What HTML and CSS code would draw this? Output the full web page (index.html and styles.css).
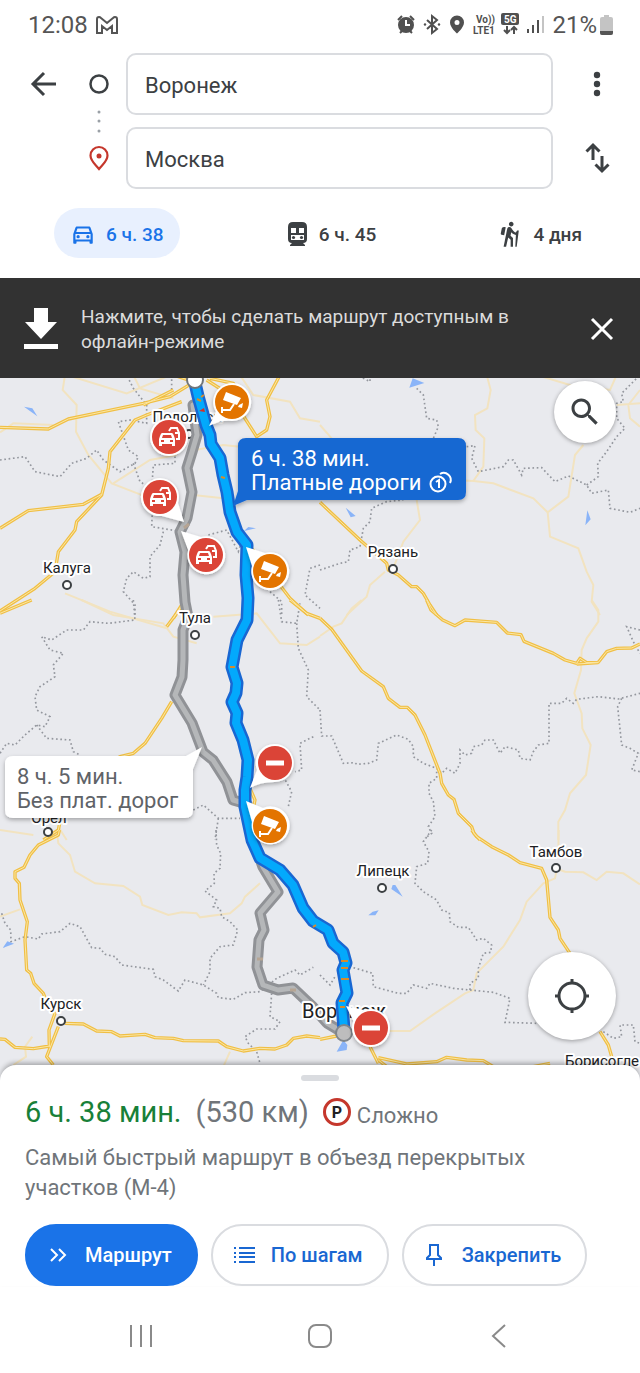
FILE: index.html
```html
<!DOCTYPE html>
<html lang="ru">
<head>
<meta charset="utf-8">
<meta name="viewport" content="width=device-width, initial-scale=1">
<title>Воронеж — Москва</title>
<link rel="stylesheet" href="styles.css">
</head>
<body>
<div class="app">
<div class="status">
  <div class="status-group">
    <span class="status-text">12:08</span>
    <svg class="gmail" width="24" height="20" viewBox="0 0 24 20"><path d="M2 18V4q0-2 2-2 1 0 2 1l6 5 6-5q1-1 2-1 2 0 2 2v14h-5V11l-5 4-5-4v7z"/></svg>
  </div>
  <div class="status-group">
    <svg class="status-icons" width="148" height="26" viewBox="397 12 148 26">
      <circle cx="406" cy="25" r="8"/><path class="ink-line" d="M398 20l4-4M414 20l-4-4M400 33l2-2M412 33l-2-2"/><path class="white-line" d="M406 20v5h4"/>
      <path class="ink-line" d="M427 20l10 9-5 4V16l5 4-10 9"/><circle cx="425" cy="24.500" r="1.200"/><circle cx="439" cy="24.500" r="1.200"/>
      <path fill-rule="evenodd" d="M457 15.500a7 7 0 0 0-7 7c0 5 7 11 7 11s7-6 7-11a7 7 0 0 0-7-7zm0 4.500a2.500 2.500 0 1 1 0 5 2.500 2.500 0 0 1 0-5z"/>
      <text x="476" y="23" class="tiny">Vo))</text><text x="473" y="34" class="tiny">LTE1</text>
      <rect x="501" y="13" width="18" height="12" rx="2"/><text x="504" y="23" class="tiny knock">5G</text>
      <path class="ink-thin" d="M507 26v7m-3-3l3 3 3-3M514 34v-7m-3 3l3-3 3 3"/>
      <path class="ink-bar" d="M528 29v4M533 25v8M538 20v13"/><path class="faint-bar" d="M543 16v17"/>
    </svg>
    <span class="status-text">21%</span>
    <svg width="14" height="20" viewBox="0 0 14 20"><path fill="#c4c4c4" d="M4 0h5v2h2q2 0 2 2v14q0 2-2 2H2q-2 0-2-2V4q0-2 2-2h2z"/><path fill="#555" d="M0 16h13v2q0 2-2 2H2q-2 0-2-2z"/></svg>
  </div>
</div>

<header class="directions">
  <form class="search-grid">
    <button type="button" class="icon-btn back" aria-label="Назад"><svg width="28" height="28" viewBox="0 0 28 28"><path class="dark-line" d="M26 14H3M14 3L3 14l11 11"/></svg></button>
    <svg class="rail" width="24" height="136" viewBox="0 0 24 136">
      <circle cx="12" cy="31" r="8.500" fill="none" stroke="#3c4043" stroke-width="2.500"/>
      <g fill="#9aa0a6"><circle cx="12" cy="59" r="1.500"/><circle cx="12" cy="68" r="1.500"/><circle cx="12" cy="78" r="1.500"/></g>
      <path d="M12 116c-4-5-8.500-8-8.500-13.500a8.500 8.500 0 0 1 17 0C20.500 108 16 111 12 116z" fill="none" stroke="#c5372c" stroke-width="2.200"/><circle cx="12" cy="103" r="2.500" fill="#c5372c"/>
    </svg>
    <input class="place place-from" type="text" value="Воронеж" aria-label="Откуда">
    <input class="place place-to" type="text" value="Москва" aria-label="Куда">
    <button type="button" class="icon-btn menu" aria-label="Ещё"><svg width="28" height="28" viewBox="0 0 28 28" fill="#3c4043"><circle cx="14" cy="5" r="3.200"/><circle cx="14" cy="14" r="3.200"/><circle cx="14" cy="23" r="3.200"/></svg></button>
    <button type="button" class="icon-btn swap" aria-label="Поменять местами"><svg width="28" height="32" viewBox="0 0 28 32"><path class="dark-line" d="M10 18V3M3.500 9.500L10 3l6.500 6.500M19 14v15M12.500 22.500L19 29l6.500-6.500"/></svg></button>
  </form>
  <nav class="modes">
    <button class="mode mode-active"><svg width="26" height="26" viewBox="0 0 24 24"><path d="M18.920 6.010C18.720 5.420 18.160 5 17.500 5h-11c-.66 0-1.210.42-1.420 1.010L3 12v8c0 .55.45 1 1 1h1c.55 0 1-.45 1-1v-1h12v1c0 .55.45 1 1 1h1c.55 0 1-.45 1-1v-8zM6.850 7h10.290l1.080 3.110H5.770zM19 17H5v-5h14z"/><circle cx="7.500" cy="14.500" r="1.500"/><circle cx="16.500" cy="14.500" r="1.500"/></svg>6 ч. 38</button>
    <button class="mode"><svg width="22" height="28" viewBox="0 0 22 28"><path fill-rule="evenodd" d="M6 2h9q5 0 5 5v12q0 4-4 4l2 2v1H3v-1l2-2q-4 0-4-4V7q0-5 5-5zM4 8v5h5V8zm8 0v5h5V8zm-8 7v5h13v-5z"/><circle cx="6.500" cy="17.500" r="1.600"/><circle cx="14.500" cy="17.500" r="1.600"/></svg>6 ч. 45</button>
    <button class="mode"><svg width="24" height="28" viewBox="3 0 20.600 24"><path d="M13.500 5.500c1.100 0 2-.9 2-2s-.9-2-2-2-2 .9-2 2 .9 2 2 2zM17.500 10.780c-1.230-.37-2.220-1.170-2.800-2.180l-1-1.600c-.41-.65-1.110-1-1.840-1-.78 0-1.590.5-1.780 1.440S7 23 7 23h2.100l1.800-8 2.100 2v6h2v-7.500l-2.100-2 .6-3c1 1.150 2.410 2.010 4 2.340L17 23h1.200L20 9h-1.500zM7.430 13.130l-2.120-.41c-.54-.11-.9-.63-.79-1.170l.76-3.930c.21-1.080 1.260-1.790 2.340-1.580l1.160.23z"/></svg>4 дня</button>
  </nav>
</header>

<section class="offline">
  <svg width="34" height="42" viewBox="0 0 34 42" fill="#fff"><path d="M10 0h14v14h9L17 31 1 14h9zM0 36h34v5H0z"/></svg>
  <p>Нажмите, чтобы сделать маршрут доступным в офлайн-режиме</p>
  <button class="icon-btn" aria-label="Закрыть"><svg width="24" height="24" viewBox="0 0 24 24"><path d="M2 2l20 20M22 2L2 22" stroke="#fff" stroke-width="3"/></svg></button>
</section>

<main class="map">
<svg class="map-canvas" viewBox="0 378 640 702" role="img" aria-label="Карта маршрута">
  <defs>
    <filter id="shade" x="-20%" y="-20%" width="140%" height="150%"><feDropShadow dx="0" dy="2" stdDeviation="2" flood-opacity=".3"/></filter>
    <g id="camera"><circle r="17" fill="#e37400"/><path fill="#fff" d="M-6-10L9-4 5 3-9-2zM7 3l4-2-1 5-4-1z"/><path d="M-10 5v6M-10 8h8l4-6" fill="none" stroke="#fff" stroke-width="2"/></g>
    <g id="traffic"><circle r="17" fill="#db4437"/><path fill="#fff" fill-rule="evenodd" d="M-7-4H3Q4-4 5-1L6 2V9H3V7H-7V9h-3V2l1-3Q-8-4-7-4zM-6-2L-7 1H3L2-2zM-8 3v2h3V3zM1 3v2h3V3z"/><path d="M0-6L2-9H8L10-4V2H7M6-4H9" fill="none" stroke="#fff" stroke-width="2"/></g>
    <g id="closed"><circle r="17" fill="#db4437"/><rect x="-9" y="-2.500" width="18" height="5" fill="#fff"/></g>
    <g id="highways">
      <path transform="translate(0 375) scale(.33333)" d="M0 157L145 162 205 132 300 112 430 85 510 65 600 10M545 80L440 120 405 135 330 230 325 280 305 360 230 440 225 465 175 530 165 590 105 640 0 708M305 358L250 388 85 407 0 460M430 90L520 45M520 0L580 20M620 15L690 60 770 185 800 165 810 125 800 75 840 0M630 10L700 25 730 80M740 500L870 670 925 720M545 690L520 730"/>
      <path transform="translate(320 375) scale(.33333)" d="M0 382L120 495 200 565 205 585 235 600 275 635 290 635 310 655 330 690 350 720"/>
      <path transform="translate(0 600) scale(.33333)" d="M95 0L0 40M545 20L500 80M515 305L485 355 435 430 400 460 360 470 280 520M185 640L175 690 130 720M870 0L920 40 960 55M750 565L765 600 755 650"/>
      <path transform="translate(320 600) scale(.33333)" d="M320 0L333 30 368 60 405 77 435 60 530 67 562 99 603 104 612 124 700 160 735 180 770 190 780 175 800 188 835 187 860 155 890 145 935 144 960 132M0 55L35 88 125 213 190 260 205 295 240 322 262 322 285 345 315 405 360 520 365 550 385 585 402 598 415 640 455 680 462 700 480 720M770 192L835 188"/>
      <path transform="translate(0 830) scale(.33333)" d="M178 0L175 15 115 45 90 75 72 112 45 125 45 145 58 160 60 210 82 275 75 330 80 420 92 430 102 460 130 490 150 540 165 550 147 600 148 650M175 590L140 680 160 705M195 580L250 582 290 603 335 605 360 618 435 613 465 623 520 625 550 632 655 633 680 650 730 663 780 655 825 657 860 645 880 625 920 618 960 623M0 627L15 628 45 652 100 656 150 648"/>
      <path transform="translate(320 830) scale(.33333)" d="M455 0L470 20 515 50 565 75 600 98 665 115 680 150 690 262 715 300 720 325 750 370M840 605L865 645 878 690M0 628L50 618M150 650L175 700M175 683L260 702 350 695 380 682 440 690 490 692 520 710M175 690L200 710M640 710L690 700"/>
    </g>
    <g id="land">
      <!-- north-west -->
      <g transform="translate(0 375) scale(.33333)">
        <g class="minor"><path d="M195 0L188 45 230 90 228 170 265 240 335 325 430 362M0 172L40 145 160 150M200 0L380 55 500 5M340 325L450 255 530 240M585 225L670 210 720 215M580 360L670 370M195 655L330 710 500 760M400 0L420 40 520 70M720 0L760 60 870 80 900 130 960 140"/></g>
        <g class="border"><path d="M0 255L75 245 105 290 180 305 215 265 260 250 290 225 310 255 360 290 405 265 415 245 385 225 355 140 390 135 440 145 440 90 400 40 385 10M400 265L420 320 460 345 455 455 545 470M455 345L460 270 525 265 525 240M490 470L480 510 450 545 450 605 430 610 400 590 380 610 370 650 405 690 405 720M625 480L680 465 715 530 725 500M810 650L845 680 845 720M960 570L930 580 915 660 960 700M515 0V50"/></g>
        <path class="water" d="M72 95L97 100 112 124zM732 468L745 456 768 460z"/>
      </g>
      <!-- north-east -->
      <g transform="translate(320 375) scale(.33333)">
        <g class="minor"><path d="M500 0L512 45 502 100 465 120 467 165 493 190 490 275 460 318 520 325 640 370 683 412 745 365 765 240 790 210M683 412L690 485 775 520 800 590 820 630 815 680 840 720M460 318L300 310M290 375L300 435 250 500 220 580M195 590L150 630 140 665 80 720M960 85L890 90M960 45L925 90 930 130 960 155M0 150L35 190M890 0L870 45 750 30 650 0"/></g>
        <g class="border"><path d="M290 40L310 60 320 130 350 135 355 155 340 190M440 215L465 212 455 250 475 290 550 275 565 255 580 255 605 300 610 280 665 278 705 320 745 303 800 330 815 355 865 345 870 400 930 412 960 400M800 330L835 305 833 265 860 230 890 185 915 160 890 130 890 85 910 80 905 55 950 10M0 585L60 565 85 560 90 525 120 515 130 460 150 440 155 400 200 380 250 375M150 0L150 20 120 5"/></g>
        <path class="water" d="M278 10L313 24 268 38zM77 398L107 423 92 427zM802 406L812 433 796 451z"/>
      </g>
      <!-- west -->
      <g transform="translate(0 600) scale(.33333)">
        <g class="minor"><path d="M245 0L340 45 490 70 520 110 590 130M640 50L770 40 840 130 920 135 960 110M0 690L100 705M175 680L200 720"/></g>
        <g class="border"><path d="M400 0L405 60 325 70 270 65 250 90 200 90 155 120 125 110 150 150 190 160 160 195 165 230 120 260 105 290 110 330 150 350 135 380 110 375 75 405 45 435 20 430 0 460M110 375L140 415 210 420 220 455 240 465M835 0L845 65 890 70 900 10M890 70L895 145 925 210 920 290 960 330M940 410L900 430 905 510 885 515M850 530L875 575 865 620M580 630L610 615 655 655 720 655M655 655L645 720"/></g>
      </g>
      <!-- east -->
      <g transform="translate(320 600) scale(.33333)">
        <g class="minor"><path d="M125 0L95 25 65 70 40 80 0 108M815 0L835 30 835 65 800 115 785 150 783 210 763 280 785 340 787 385 812 435 798 525 750 580 735 630 715 665 715 720"/></g>
        <g class="border"><path d="M0 330L5 408 35 408 70 490 105 488 110 493 145 490 170 480 175 430 230 405 265 418 280 440 280 470 310 490 350 505 365 520 380 505 405 520 420 490 420 450 435 465 455 460 460 440 485 435 495 420 520 420 540 460 555 440 595 450 600 475 630 480 640 455 655 435 687 430 687 310 725 310 740 295 760 310 770 298 835 290 895 297 960 280M905 295L893 320 905 435 930 445 955 460 935 510 960 515M960 90L920 80 940 125 960 160M350 515L350 535 327 550 327 580 340 605 345 650 325 680 335 700 315 715"/></g>
      </g>
      <!-- south-west -->
      <g transform="translate(0 830) scale(.33333)">
        <g class="minor"><path d="M170 0L175 40 210 75 225 125 285 160 370 168 420 200 427 225 505 255 545 247 590 250 600 262 690 250 725 220 735 200 780 160M0 260L60 238M97 620L75 650 78 680 40 705M690 665L670 710"/></g>
        <g class="border"><path d="M5 250L15 280 32 300 33 335 75 320 115 327 125 312 180 305 210 280 240 290 275 353 300 355 315 373 345 380 365 405 460 418 465 440 490 450 535 483 555 450 610 465 650 490 655 503 700 508 735 488 780 485 830 445 885 420 900 435 940 412M648 0L650 45 662 70 660 115 642 130 643 160 615 183 650 210 640 230 660 235 665 260 690 275 713 300 700 345 660 350 630 385 630 425 610 465M815 490L810 560 840 575 825 597 770 597 735 620 745 640 770 665 780 700"/></g>
        <path class="water" d="M8 354L22 334 42 341z"/>
      </g>
      <!-- south-east -->
      <g transform="translate(320 830) scale(.33333)">
        <g class="minor"><path d="M716 0L715 70M720 120L735 125 790 127 830 150 860 125 910 130 960 163M710 120L705 145 670 160 620 215 600 270 550 350 470 430 460 480 435 490 345 550 270 603 200 603"/></g>
        <g class="border"><path d="M335 0L310 35 327 65 323 100 290 110 285 160 310 185 350 210 365 240 388 248 390 275 415 292 445 292 470 330 490 325 515 345 512 367 490 370 475 415 475 445 450 460 450 480 400 475 330 460 320 475 280 465 260 490 235 490 160 470 158 430 90 410 M450 480L520 487 570 505 555 577 650 580M0 435L30 465 45 440M850 605L880 625 905 620 900 585 940 585 945 635 960 640"/></g>
        <path class="water" d="M218 165L226 165 248 200 214 177zM145 256L158 245 176 241 166 256zM50 665L70 630 82 645 80 660z"/>
      </g>
    </g>
  </defs>
  <use href="#land"/>
  <use href="#highways" class="major"/>
  <use href="#highways" class="major-core"/>

  <g class="town"><circle cx="189" cy="434" r="4"/><circle cx="67" cy="585" r="4"/><circle cx="393" cy="569" r="4"/><circle cx="195" cy="635" r="4"/><circle cx="48" cy="832" r="4"/><circle cx="556" cy="868" r="4"/><circle cx="382" cy="888" r="4"/><circle cx="61" cy="1021" r="4"/></g>

  <g class="route-alt">
    <path id="alt" d="M193 405L197 435 192 452 187 468 192 492 187 518 180 532 185 552 183 575 185 602 188 617 183 630 183 660 182 677 175 695 192 723 203 752 213 760 227 782 233 800 247 804M255 845L263 867 278 892 260 913 264 930 259 940 257 967 263 985 278 990 293 988 313 1007 327 1023 342 1032"/>
    <use href="#alt" class="inner"/>
  </g>
  <g class="town-name"><text x="187" y="422">Подольск</text><text x="67" y="573">Калуга</text><text x="393" y="557">Рязань</text><text x="195" y="623">Тула</text><text x="49" y="823">Орел</text><text x="556" y="857">Тамбов</text><text x="383" y="876">Липецк</text><text x="61" y="1009">Курск</text><text x="602" y="1066">Борисогле</text><text x="344" y="1018" class="city">Воронеж</text></g>
  <g class="route-main">
    <path id="main" d="M195 383L198 396 206 425 210 435 211 444 220 458 223 475 227 492 230 512 237 532 247 545 246 575 248 598 247 620 237 640 232 667 237 683 236 693 232 702 237 713 236 723 243 740 248 760 247 777 245 790 245 807 252 840 260 858 280 870 293 885 303 908 313 921 328 930 333 943 343 952 346 963 343 970 347 993 342 1003 344 1030"/>
    <use href="#main" class="inner"/>
  </g>
  <path class="slow" d="M197 399l4 2M201 397l3-2M221 477l4 1M230 667h5M341 961h7M341 968h7M341 979h8M339 1001h6M340 1007h5M313 927l3-2"/>
  <path d="M199 411l5-3 1 4z" fill="#d93025"/><path d="M184 528l5-4M257 959h6M290 990h6" stroke="#b6a594" stroke-width="3"/>
  <circle cx="195" cy="380" r="8" fill="#fff" stroke="#70757a" stroke-width="2"/>
  <circle cx="344" cy="1033" r="8" fill="#bdbdbd" stroke="#80868b" stroke-width="2"/>

  <g class="pins" filter="url(#shade)">
    <path d="M209 426L216 412A19 19 0 1 1 232 421Q220 420 209 426z"/>
    <circle cx="169" cy="437" r="19"/>
    <path d="M184 522L162 516A19 19 0 1 1 178 503z"/>
    <path d="M181 531L201 537A19 19 0 1 1 188 550z"/>
    <path d="M246 547L265 553A19 19 0 1 1 252 566z"/>
    <path d="M250 788L257 770A19 19 0 1 1 274 782Q260 782 250 788z"/>
    <path d="M246 801L263 808A19 19 0 1 1 252 822z"/>
    <circle cx="371" cy="1028" r="19"/><path d="M346 1006L364 1010 354 1022z"/>
  </g>
  <use href="#camera" x="232" y="402"/><use href="#camera" x="270" y="571"/><use href="#camera" x="270" y="826"/>
  <use href="#traffic" x="169" y="437"/><use href="#traffic" x="160" y="497"/><use href="#traffic" x="206" y="555"/>
  <use href="#closed" x="275" y="763"/><use href="#closed" x="371" y="1028"/>

  <g filter="url(#shade)"><path fill="#1967d2" d="M246 438H458q8 0 8 8V492q0 8-8 8H247L233 506 238 491V446q0-8 8-8z"/><path fill="#fff" d="M13 756H186L202 747 193 769V810q0 8-8 8H13q-8 0-8-8V764q0-8 8-8z"/></g>
  <g class="callout" fill="#fff"><text x="251" y="466">6 ч. 38 мин.</text><text x="251" y="490">Платные дороги</text></g>
  <g fill="none" stroke="#fff" stroke-width="2"><circle cx="438" cy="484" r="7.500"/><path d="M440 474a7 7 0 0 1 10 9M436 482l3-2v8"/></g>
  <g class="callout" fill="#5f6368"><text x="17" y="784">8 ч. 5 мин.</text><text x="17" y="808">Без плат. дорог</text></g>
</svg>
<button class="fab fab-search" aria-label="Поиск"><svg width="36" height="36" viewBox="0 0 24 24" fill="#3c4043"><path d="M15.500 14h-.79l-.28-.27C15.410 12.590 16 11.110 16 9.500 16 5.910 13.090 3 9.500 3S3 5.910 3 9.500 5.910 16 9.500 16c1.610 0 3.090-.59 4.230-1.570l.27.28v.79l5 4.990L20.490 19zm-6 0C7.010 14 5 11.990 5 9.500S7.010 5 9.500 5 14 7.010 14 9.500 11.990 14 9.500 14z"/></svg></button>
<button class="fab fab-locate" aria-label="Моё местоположение"><svg width="36" height="36" viewBox="0 0 36 36" fill="none" stroke="#3c4043" stroke-width="3"><circle cx="18" cy="18" r="13"/><path d="M18 1v5M18 30v5M1 18h5M30 18h5"/></svg></button>
</main>

<section class="sheet">
  <div class="handle"></div>
  <h1 class="summary"><span class="time">6 ч. 38 мин.</span><span class="distance">(530 км)</span><svg width="28" height="28" viewBox="0 0 28 28"><circle cx="14" cy="14" r="12.500" fill="#fff" stroke="#c5372c" stroke-width="3"/><text x="14" y="20" text-anchor="middle" class="parking-letter">P</text></svg><span class="parking">Сложно</span></h1>
  <p class="description">Самый быстрый маршрут в объезд перекрытых участков (M-4)</p>
  <div class="actions">
    <button class="pill pill-primary"><svg width="24" height="24" viewBox="0 0 24 24"><path d="M4 6l6 6-6 6M12 6l6 6-6 6"/></svg>Маршрут</button>
    <button class="pill"><svg width="24" height="24" viewBox="0 0 24 24"><path d="M6 5h16M6 10h16M6 14h16M6 19h16M1 5h2M1 10h2M1 14h2M1 19h2"/></svg>По шагам</button>
    <button class="pill"><svg width="24" height="24" viewBox="2 0 24 24"><path d="M8 2h8v10l3 3v1H5v-1l3-3zM12 16v7"/></svg>Закрепить</button>
  </div>
</section>

<nav class="system-nav">
  <button aria-label="Недавние"><svg width="28" height="28" viewBox="0 0 28 28"><path d="M4 3v22M14 3v22M24 3v22"/></svg></button>
  <button aria-label="Домой"><svg width="28" height="28" viewBox="0 0 28 28"><rect x="3" y="3" width="22" height="22" rx="7"/></svg></button>
  <button aria-label="Назад"><svg width="28" height="28" viewBox="0 0 28 28"><path d="M20 3L8 14l12 11"/></svg></button>
</nav>
</div>
</body>
</html>
```
FILE: styles.css
```css
* { box-sizing: border-box; }
body { margin: 0; background: #fff; color: #3c4043; font-family: Roboto, "Noto Sans", sans-serif; }
button { padding: 0; border: 0; background: none; color: inherit; font: inherit; }
svg { display: block; flex: none; }
p, h1 { margin: 0; font-weight: 400; }

.status { display: flex; justify-content: space-between; align-items: center; height: 50px; padding: 0 26px 0 28px; }
.status-group { display: flex; align-items: center; gap: 7px; }
.status-text { color: #555; font-size: 24px; }
.status-group svg:last-child { margin-left: -4px; }
.status-group .gmail:last-child { margin-left: 0; }
.gmail { fill: none; stroke: #555; stroke-width: 2; }
.status-icons { fill: #505050; }
.ink-line { fill: none; stroke: #505050; stroke-width: 2; }
.ink-thin { fill: none; stroke: #505050; stroke-width: 2; }
.white-line { fill: none; stroke: #fff; stroke-width: 2; }
.ink-bar { stroke: #505050; stroke-width: 2; }
.faint-bar { stroke: #c4c4c4; stroke-width: 2; }
.tiny { font-size: 10px; font-weight: 700; }
.knock { fill: #fff; }

.directions { height: 228px; padding-top: 3px; }
.search-grid { display: grid; grid-template-columns: 56px 54px minmax(0, 1fr) 87px; grid-template-rows: 62px 62px; row-gap: 12px; padding-left: 16px; align-items: center; justify-items: center; }
.icon-btn { display: grid; place-items: center; }
.dark-line { fill: none; stroke: #3c4043; stroke-width: 3; }
.back { grid-area: 1 / 1; }
.rail { grid-area: 1 / 2 / 3 / 3; }
.place { width: 100%; height: 62px; padding: 2px 17px 0; border: 2px solid #dadce0; border-radius: 10px; background: #fff; color: #3c4043; font: 22px/30px Roboto, "Noto Sans", sans-serif; }
.place-from { grid-area: 1 / 3; }
.place-to { grid-area: 2 / 3; }
.menu { grid-area: 1 / 4; }
.swap { grid-area: 2 / 4; }
.modes { display: flex; justify-content: space-between; padding: 19px 42px 0 54px; }
.mode { display: flex; align-items: center; gap: 10px; height: 50px; padding: 2px 16px 0; border-radius: 25px; font-size: 19px; font-weight: 500; }
.mode svg { fill: currentColor; }
.mode-active { background: #e8f0fe; color: #1a73e8; }

.offline { display: flex; align-items: center; min-height: 100px; padding: 2px 26px 0 24px; background: #323232; color: #dcdcdc; }
.offline p { flex: 1; padding: 0 48px 0 23px; font-size: 19px; line-height: 25px; }

.map { position: relative; background: #e8eaed; }
.map-canvas { width: 100%; height: auto; background: #e9eaee; }
.minor { fill: none; stroke: #f2e3c0; stroke-width: 6; }
.major { fill: none; stroke: #f0bf45; stroke-width: 10; stroke-linejoin: round; }
.major-core { fill: none; stroke: #fbe7a6; stroke-width: 3; stroke-linejoin: round; }
.border { fill: none; stroke: #94979e; stroke-width: 5; stroke-dasharray: 5 8; }
.water { fill: #8ab4f8; }
.town { fill: #fff; stroke: #3c4043; stroke-width: 2; }
.town-name { fill: #202124; stroke: #fff; stroke-width: 4; stroke-linejoin: round; paint-order: stroke; font-size: 15px; text-anchor: middle; }
.city { font-size: 20px; }
.route-alt, .route-main { fill: none; stroke-linejoin: round; stroke-linecap: round; stroke-width: 13; }
.route-alt { stroke: #909296; stroke-width: 11; }
.route-alt .inner { stroke: #b5b7b9; stroke-width: 5; }
.route-main { stroke: #1967d2; }
.route-main .inner { stroke: #03a9fc; stroke-width: 8; }
.slow { stroke: #d58b2c; stroke-width: 2; }
.pins { fill: #fff; }
.callout { font-size: 22px; }
.fab { position: absolute; display: grid; place-items: center; border-radius: 50%; background: #fff; box-shadow: 0 1px 4px rgba(0, 0, 0, .35); }
.fab-search { top: 3px; right: 24px; width: 62px; height: 62px; }
.fab-locate { right: 24px; bottom: 40px; width: 88px; height: 88px; }

.sheet { position: relative; margin-top: -15px; padding: 10px 25px 0; border-radius: 16px 16px 0 0; background: #fff; box-shadow: 0 -3px 5px -1px rgba(0, 0, 0, .3); }
.handle { width: 38px; height: 6px; margin: 0 auto; border-radius: 3px; background: #dadce0; }
.summary { display: flex; align-items: center; height: 62px; font-size: 29px; white-space: nowrap; }
.time { color: #188038; }
.distance { margin: 0 14px; color: #70757a; }
.parking-letter { font-size: 16px; font-weight: 700; fill: #202124; }
.parking { margin-left: 6px; padding-top: 6px; color: #70757a; font-size: 22px; }
.description { max-width: 520px; color: #70757a; font-size: 22px; line-height: 30px; }
.actions { display: flex; gap: 13px; margin-top: 21px; }
.pill { display: flex; align-items: center; gap: 14px; height: 62px; padding: 0 24px 0 20px; border: 2px solid #dadce0; border-radius: 31px; color: #1967d2; font-size: 20px; font-weight: 500; }
.pill svg { fill: none; stroke: currentColor; stroke-width: 2; }
.pill-primary { border-color: #1a73e8; background: #1a73e8; color: #fff; }
.system-nav { display: flex; justify-content: space-around; padding: 36px 51px 24px; }
.system-nav svg { fill: none; stroke: #8a8a8a; stroke-width: 2; }
```
